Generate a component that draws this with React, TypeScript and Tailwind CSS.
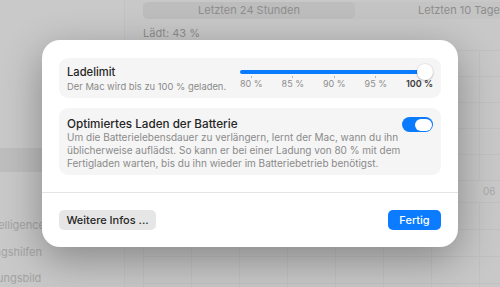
export default function App() {
  const cols = Array.from({ length: 8 });
  const topRows = Array.from({ length: 5 });
  const bottomRows = Array.from({ length: 4 });
  const labels = ["80 %", "85 %", "90 %", "95 %"];
  return (
    <div className="relative w-[500px] h-[287px] overflow-hidden bg-[#c8c8c8] font-['Inter',sans-serif]">
      <div className="flex h-full">
        <aside className="w-[125px] shrink-0 border-r border-[#c2c2c2] bg-[#c9c9c9] pt-[148px]">
          <div className="h-[24px] bg-[#bebebe]" />
          <div className="mt-[40px] flex flex-col">
            {["Apple Intelligence & Siri", "Bedienungshilfen", "Erscheinungsbild"].map((t) => (
              <div key={t} className="h-[26.5px] flex items-center ml-[-48px] whitespace-nowrap text-[11px] text-[#a3a3a3]">
                {t}
              </div>
            ))}
          </div>
        </aside>
        <main className="flex-1 pl-[18px] pt-[2px] flex flex-col">
          <div className="flex h-[18px] w-[420px] rounded-[5px] bg-[#c4c4c4]">
            <div className="w-[212px] rounded-[5px] bg-[#bdbdbd] flex items-center justify-center text-[11px] text-[#8d8d8d]">
              Letzten 24 Stunden
            </div>
            <div className="w-[208px] flex items-center justify-center text-[11px] text-[#8d8d8d]">
              Letzten 10 Tage
            </div>
          </div>
          <div className="mt-[7px] text-[11px] leading-[14px] text-[#8d8d8d]">Lädt: 43 %</div>
          <div className="mt-[10px] flex flex-col">
            {topRows.map((_, i) => (
              <div key={i} className="flex h-[26px] border-t border-[#c1c1c1]">
                {cols.map((_, j) => (
                  <div key={j} className="w-[48px] shrink-0 border-l border-[#c1c1c1]" />
                ))}
              </div>
            ))}
            <div className="flex h-[22px] items-center border-t border-[#c1c1c1] pl-[340px] text-[10px] text-[#a9a9a9]">
              06
            </div>
            {bottomRows.map((_, i) => (
              <div key={i} className="flex h-[27px] border-t border-[#c1c1c1]">
                {cols.map((_, j) => (
                  <div key={j} className="w-[48px] shrink-0 border-l border-[#c1c1c1]" />
                ))}
              </div>
            ))}
          </div>
        </main>
      </div>

      <div className="absolute left-[42px] top-[40px] w-[416px] h-[207px] rounded-[18px] bg-white shadow-[0_12px_40px_rgba(0,0,0,0.33)] flex flex-col">
        <div className="h-[152px] px-[17px] pt-[18px] flex flex-col gap-[10px]">
          <section className="h-[40px] rounded-[9px] bg-[#f5f5f5] px-[8px] flex justify-between">
            <div className="pt-[7px] flex flex-col">
              <div className="text-[11.2px] leading-[14px] font-medium text-[#262626]">Ladelimit</div>
              <div className="text-[9.4px] leading-[13px] text-[#8a8a8a] mt-[1px]">Der Mac wird bis zu 100 % geladen.</div>
            </div>
            <div className="w-[193px] mt-[6px] flex flex-col">
              <div className="relative h-[16px] flex items-center">
                <div className="h-[4px] flex-1 mr-[8px] rounded-full bg-[#0a7aff]" />
                <div className="absolute right-0 top-0 h-[16px] w-[16px] rounded-full bg-white shadow-[0_0.5px_2px_rgba(0,0,0,0.35)]" />
              </div>
              <div className="-mt-[4px] flex justify-between">
                {labels.map((l) => (
                  <div key={l} className="flex flex-col items-center">
                    <div className="h-[2px] w-[1px] bg-[#b5b5b5]" />
                    <div className="text-[9px] leading-[11px] text-[#8e8e8e] whitespace-nowrap">{l}</div>
                  </div>
                ))}
                <div className="flex flex-col items-center">
                  <div className="h-[2px] w-[1px]" />
                  <div className="text-[9px] leading-[11px] font-semibold text-[#3a3a3a] whitespace-nowrap">100 %</div>
                </div>
              </div>
            </div>
          </section>
          <section className="h-[67px] rounded-[9px] bg-[#f5f5f5] px-[8px] pt-[9px] flex justify-between">
            <div className="flex flex-col">
              <div className="text-[11.7px] leading-[14px] font-medium text-[#262626]">Optimiertes Laden der Batterie</div>
              <div className="text-[10px] leading-[13px] text-[#8a8a8a] whitespace-nowrap">
                Um die Batterielebensdauer zu verlängern, lernt der Mac, wann du ihn
                <br />
                üblicherweise auflädst. So kann er bei einer Ladung von 80 % mit dem
                <br />
                Fertigladen warten, bis du ihn wieder im Batteriebetrieb benötigst.
              </div>
            </div>
            <div className="h-[15px] w-[31px] rounded-full bg-[#0a7aff] flex items-center justify-end pr-[1.5px]">
              <div className="h-[12px] w-[17px] rounded-full bg-white" />
            </div>
          </section>
        </div>
        <div className="border-t border-[#e4e4e4] flex-1 px-[17px] flex items-center justify-between">
          <button className="h-[20px] w-[97px] rounded-[5px] bg-[#e6e6e6] text-[11px] font-medium text-[#262626]">
            Weitere Infos ...
          </button>
          <button className="h-[20px] w-[53px] rounded-[5px] bg-[#0b7bff] text-[11px] font-medium text-white">
            Fertig
          </button>
        </div>
      </div>
    </div>
  );
}
